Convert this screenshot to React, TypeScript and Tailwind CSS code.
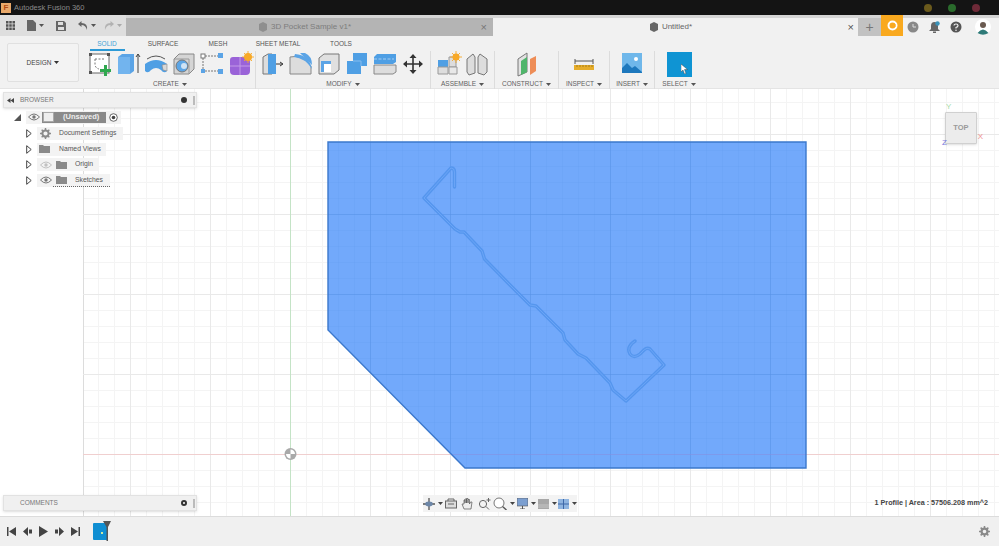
import React from 'react';

const Caret = ({ color = '#555' }: { color?: string }) => (
  <svg width="5" height="3" viewBox="0 0 5 3" className="inline-block ml-[3px] align-middle">
    <path d="M0 0h5L2.5 3z" fill={color} />
  </svg>
);

const Ico = ({ children, w = 28 }: { children: React.ReactNode; w?: number }) => (
  <svg width={w} height="26" viewBox={`0 0 ${w} 26`} className="shrink-0">
    {children}
  </svg>
);

const SketchIcon = () => (
  <Ico>
    <rect x="4" y="3" width="19" height="19" fill="#fff" stroke="#666" strokeWidth="1" />
    <path d="M9 8h10M9 8v5q0 4 4 5" fill="none" stroke="#777" strokeDasharray="2 1.5" />
    <rect x="3" y="2" width="3" height="3" fill="#555" />
    <rect x="21" y="2" width="3" height="3" fill="#555" />
    <rect x="3" y="20" width="3" height="3" fill="#555" />
    <path d="M18 14h3v4h4v3h-4v4h-3v-4h-4v-3h4z" fill="#2fa84f" />
  </Ico>
);
const ExtrudeIcon = () => (
  <Ico>
    <path d="M4 6l4-3h12v17l-4 3H4z" fill="#5ba4e6" />
    <path d="M4 6h12v17H4z" fill="#72b4ee" />
    <path d="M24 22V3M22 6l2-3 2 3" stroke="#444" fill="none" />
  </Ico>
);
const RevolveIcon = () => (
  <Ico>
    <path d="M3 13q11-8 22 0v7q-3 3-6-1-5-4-10 0-3 4-6 1z" fill="#4f9fe4" />
    <path d="M5 8q9-6 18 0" fill="none" stroke="#555" />
    <path d="M20 14l5-1v7l-4-1z" fill="#d8d8d8" stroke="#888" strokeWidth=".6" />
  </Ico>
);
const HoleIcon = () => (
  <Ico>
    <path d="M4 8l5-5h15v15l-5 5H4z" fill="#d5d5d5" stroke="#888" />
    <path d="M4 8h15v15" fill="none" stroke="#999" />
    <circle cx="12" cy="15" r="6" fill="#5da6e6" stroke="#777" />
    <circle cx="14" cy="15" r="3" fill="#cfe3f5" />
  </Ico>
);
const PatternIcon = () => (
  <Ico>
    <path d="M7 5h13M7 20h13M5 7v11" stroke="#777" strokeDasharray="2 1" fill="none" />
    <rect x="3" y="3" width="4" height="4" fill="#fff" stroke="#777" />
    <rect x="20" y="2" width="5" height="5" fill="#5ba4e6" />
    <rect x="3" y="18" width="4" height="4" fill="#5ba4e6" />
    <rect x="20" y="18" width="5" height="5" fill="#5ba4e6" />
  </Ico>
);
const FormIcon = () => (
  <Ico>
    <path d="M4 9q0-3 3-3h12q5 0 5 5v9q0 4-4 4H8q-4 0-4-4z" fill="#9a63d8" />
    <path d="M4 15h20M14 6v18" stroke="#c39be8" />
    <circle cx="22" cy="6" r="4" fill="#f7a928" />
    <path d="M22 0v12M16 6h12M18 2l8 8M26 2l-8 8" stroke="#f7a928" strokeWidth=".9" />
  </Ico>
);
const PressPullIcon = () => (
  <Ico>
    <path d="M4 6l5-3h4v20H4z" fill="#ddd" stroke="#777" />
    <path d="M9 3h8v20H9z" fill="#4f9fe4" />
    <path d="M17 13h6M21 11l3 2-3 2" stroke="#333" fill="none" />
  </Ico>
);
const FilletIcon = () => (
  <Ico>
    <path d="M3 23V6q12-3 21 9v8z" fill="#ddd" stroke="#888" />
    <path d="M8 3q14 1 17 15-7-11-18-12z" fill="#5ba4e6" />
    <path d="M13 2h5q7 3 7 12" fill="#5ba4e6" />
  </Ico>
);
const ChamferIcon = () => (
  <Ico>
    <path d="M4 7l5-4h15v16l-5 4H4z" fill="#e0e0e0" stroke="#777" />
    <path d="M6 10h10v11H6z" fill="#5ba4e6" />
    <path d="M9 13h7v8H9z" fill="#fff" />
  </Ico>
);
const CombineIcon = () => (
  <Ico>
    <path d="M10 2h14v13h-6v8H4V10h6z" fill="#4f9fe4" />
    <path d="M10 10h8v5" fill="none" stroke="#86bdef" />
  </Ico>
);
const OffsetIcon = () => (
  <Ico>
    <path d="M3 14h22v7l-3 2H3z" fill="#ddd" stroke="#888" />
    <path d="M3 6l3-3h19v8l-3 2H3z" fill="#4f9fe4" />
    <path d="M3 8h20" stroke="#a5cdf2" strokeDasharray="3 1.5" />
  </Ico>
);
const MoveIcon = () => (
  <Ico>
    <path d="M14 6v14M7 13h14" stroke="#333" strokeWidth="1.6" />
    <path d="M14 3l3.500 4h-7zM14 23l3.500-4h-7zM4 13l4-3.500v7zM24 13l-4-3.500v7z" fill="#333" />
  </Ico>
);
const NewComponentIcon = () => (
  <Ico>
    <path d="M3 9h10v7H3z" fill="#4f9fe4" />
    <path d="M14 6h7v10h-7z" fill="#ddd" stroke="#999" />
    <path d="M3 16h10v7H3z" fill="#ddd" stroke="#999" />
    <path d="M14 16h8v7h-8z" fill="#e8e8e8" stroke="#999" />
    <circle cx="21" cy="6" r="3.500" fill="#f7a928" />
    <path d="M21 0v12M15 6h12M17 2l8 8M25 2l-8 8" stroke="#f7a928" strokeWidth=".9" />
  </Ico>
);
const JointIcon = () => (
  <Ico>
    <path d="M4 8l6-5 2 3v16l-6 2-2-3z" fill="#ddd" stroke="#777" />
    <path d="M24 8l-7-5-2 3v16l6 2 3-3z" fill="#ddd" stroke="#777" />
  </Ico>
);
const PlaneIcon = () => (
  <Ico>
    <path d="M5 8l9-6v19l-9 4z" fill="#e2e2e2" stroke="#777" />
    <path d="M8 10l6-4v15l-6 3z" fill="#4fb56b" />
    <path d="M17 8l6-3v15l-6 4z" fill="#ee8d57" />
  </Ico>
);
const MeasureIcon = () => (
  <Ico>
    <path d="M5 8v5M23 8v5M5 10h18" stroke="#555" fill="none" />
    <rect x="4" y="14" width="20" height="5" fill="#e6ad2b" />
    <path d="M7 14v2M10 14v2M13 14v2M16 14v2M19 14v2M22 14v2" stroke="#8a6a10" strokeWidth=".7" />
  </Ico>
);
const InsertIcon = () => (
  <Ico>
    <rect x="4" y="2" width="20" height="20" fill="#6fb7ea" />
    <circle cx="18" cy="8" r="2" fill="#fff" />
    <path d="M4 22v-5l5-5 5 5 3-2 7 6v1z" fill="#1d78bd" />
  </Ico>
);

const RibbonGroup = ({
  width,
  label,
  last,
  children,
}: {
  width: number;
  label: string;
  last?: boolean;
  children: React.ReactNode;
}) => (
  <div
    className={`flex flex-col items-center shrink-0 ${last ? '' : 'border-r border-[#dcdcdc]'}`}
    style={{ width }}
  >
    <div className="flex h-[26px] items-center justify-center">{children}</div>
    <div className="h-[12px] leading-[13px] text-[6.5px] text-[#5f5f5f] whitespace-nowrap">
      {label}
      <Caret />
    </div>
  </div>
);

const Eye = ({ faded }: { faded?: boolean }) => (
  <svg width="12" height="8" viewBox="0 0 12 8" className={`shrink-0 ${faded ? 'opacity-40' : ''}`}>
    <path d="M.5 4Q6-2 11.500 4 6 10 .5 4z" fill="none" stroke="#777" />
    <circle cx="6" cy="4" r="1.700" fill="#777" />
  </svg>
);
const Folder = () => (
  <svg width="11" height="8" viewBox="0 0 11 8" className="shrink-0">
    <path d="M0 0h4l1 1h6v7H0z" fill="#8a8a8a" />
  </svg>
);
const Arrow = () => (
  <svg width="6" height="9" viewBox="0 0 6 9" className="shrink-0">
    <path d="M.7.7L5.200 4.500.7 8.300z" fill="#fff" stroke="#444" strokeWidth="1" />
  </svg>
);

const TreeLabel = ({ children }: { children: React.ReactNode }) => (
  <span className="text-[6.8px] leading-none text-[#555] whitespace-nowrap">{children}</span>
);

const BrowserTree = () => (
  <div className="flex flex-col mt-px text-[#555]">
    <div className="flex items-center h-[16px] pl-[14px]">
      <svg width="7" height="7" viewBox="0 0 7 7" className="shrink-0">
        <path d="M0 7L7 0v7z" fill="#555" />
      </svg>
      <div className="flex items-center h-[13px] ml-[5px] pl-[2px] bg-[#f3f3f3]">
        <Eye />
        <div className="flex items-center h-[11px] w-[64px] ml-[2px] bg-[#8a8a8a]">
          <div className="w-[11px] h-[10px] ml-px bg-[#eee] border border-[#aaa] rounded-[1px]" />
          <span className="ml-[9px] text-[7.5px] leading-none font-bold text-[#eee]">(Unsaved)</span>
        </div>
        <svg width="9" height="9" viewBox="0 0 9 9" className="ml-[3px] mr-[3px]">
          <circle cx="4.500" cy="4.500" r="3.800" fill="#fff" stroke="#444" strokeWidth=".8" />
          <circle cx="4.500" cy="4.500" r="1.800" fill="#444" />
        </svg>
      </div>
    </div>
    <div className="flex items-center h-[16px] pl-[26px]">
      <Arrow />
      <div className="flex items-center h-[13px] ml-[5px] pl-[3px] pr-[7px] bg-[#f3f3f3]">
        <svg width="11" height="11" viewBox="0 0 12 12" className="shrink-0">
          <circle cx="6" cy="6" r="3.400" fill="none" stroke="#8a8a8a" strokeWidth="2.200" />
          <path d="M6 0v2.500M6 9.500V12M0 6h2.500M9.500 6H12M1.800 1.800l1.800 1.800M8.400 8.400l1.800 1.800M1.800 10.200l1.800-1.800M8.400 3.600l1.800-1.800" stroke="#8a8a8a" strokeWidth="1.600" />
        </svg>
        <span className="ml-[8px] flex">
          <TreeLabel>Document Settings</TreeLabel>
        </span>
      </div>
    </div>
    <div className="flex items-center h-[16px] pl-[26px]">
      <Arrow />
      <div className="flex items-center h-[13px] ml-[5px] pl-[2px] pr-[5px] bg-[#f3f3f3]">
        <Folder />
        <span className="ml-[9px] flex">
          <TreeLabel>Named Views</TreeLabel>
        </span>
      </div>
    </div>
    <div className="flex items-center h-[15px] pl-[26px]">
      <Arrow />
      <div className="flex items-center h-[13px] ml-[5px] pl-[3px] pr-[6px] bg-[#f3f3f3]">
        <Eye faded />
        <span className="ml-[4px] flex">
          <Folder />
        </span>
        <span className="ml-[8px] flex">
          <TreeLabel>Origin</TreeLabel>
        </span>
      </div>
    </div>
    <div className="flex items-center h-[16px] pl-[26px]">
      <Arrow />
      <div className="flex items-center h-[13px] ml-[5px] pl-[3px] pr-[7px] bg-[#f3f3f3] relative">
        <Eye />
        <span className="ml-[4px] flex">
          <Folder />
        </span>
        <span className="ml-[8px] flex">
          <TreeLabel>Sketches</TreeLabel>
        </span>
        <span className="absolute left-[16px] right-0 bottom-0 border-b border-dotted border-[#666]" />
      </div>
    </div>
  </div>
);

const majorX = [130, 210, 290, 370, 450, 530, 610, 690, 770, 850, 930];
const majorY = [134, 214, 294, 374, 454];

const xs: number[] = [];
for (let x = 98; x < 999; x += 16) xs.push(x);
const ys: number[] = [];
for (let y = 102; y < 516; y += 16) ys.push(y);

const slot =
  'M454.5 187V172Q454.5 168 451 168L424 198L455 229L460 232L464 232L482 251L484.5 259L510 285L530 305L536 306L563 333L565 340L578 354L586 358L610 383L613 390L626 401L664 365L650 349Q647 347 644 350L640 354Q634 359 630 354Q626 347 635 341';

const Viewport = () => (
  <svg viewBox="0 89 999 427" width="999" height="427" className="absolute inset-0">
    <rect x="0" y="89" width="999" height="427" fill="#ffffff" />
    {xs.map(x => (
      <path key={x} d={`M${x + 0.5} 89V516`} stroke="#f4f4f4" />
    ))}
    {ys.map(y => (
      <path key={y} d={`M83 ${y + 0.5}H999`} stroke="#f4f4f4" />
    ))}
    <path d="M83.5 89V516" stroke="#dcdcdc" />
    {majorX.map(x => (
      <path key={x} d={`M${x + 0.5} 89V516`} stroke="#e9e9e9" />
    ))}
    {majorY.map(y => (
      <path key={y} d={`M83 ${y + 0.5}H999`} stroke="#e9e9e9" />
    ))}
    <path d="M83 454.5H999" stroke="#f0cfcf" />
    <path d="M290.5 89V516" stroke="#c4e3c6" />
    <path d="M328 142H806V468H465L328 330Z" fill="#72a9fb" />
    {xs.filter(x => x > 328 && x < 806).map(x => (
      <path key={x} d={`M${x + 0.5} 142V${x < 465 ? 330 + (x - 328) : 468}`} stroke="#5f9bf0" strokeOpacity="0.2" />
    ))}
    {ys.filter(y => y > 142 && y < 468).map(y => (
      <path key={y} d={`M${y < 330 ? 328 : 328 + (y - 330)} ${y + 0.5}H806`} stroke="#5f9bf0" strokeOpacity="0.2" />
    ))}
    {majorX.filter(x => x > 328 && x < 806).map(x => (
      <path key={x} d={`M${x + 0.5} 142V${x < 465 ? 330 + (x - 328) : 468}`} stroke="#5a94e8" strokeOpacity="0.55" />
    ))}
    {majorY.filter(y => y > 142 && y < 468).map(y => (
      <path key={y} d={`M${y < 330 ? 328 : 328 + (y - 330)} ${y + 0.5}H806`} stroke={y === 454 ? '#8a8fe0' : '#5a94e8'} strokeOpacity="0.55" />
    ))}
    <path d="M328 142H806V468H465L328 330Z" fill="none" stroke="#3b78cc" strokeWidth="1.400" />
    <path d={slot} fill="none" stroke="#5596ee" strokeWidth="3.400" strokeLinejoin="round" strokeLinecap="round" />
    <path d={slot} fill="none" stroke="#78aefb" strokeWidth="0.6" strokeLinejoin="round" />
    <circle cx="290.5" cy="454" r="6" fill="#a9a9a9" />
    <path d="M290.5 454V449.5A4.5 4.5 0 0 1 295 454zM290.5 454V458.5A4.5 4.5 0 0 1 286 454z" fill="#ffffff" />
  </svg>
);

const ViewCube = () => (
  <div className="absolute right-[22px] top-[23px] w-[32px] h-[32px] bg-[#ececec] border border-[#d0d0d0] rounded-[1px] flex items-center justify-center shadow-sm">
    <span className="text-[7.5px] font-bold text-[#9a9a9a]">TOP</span>
    <span className="absolute -top-[12px] left-0 text-[8px] text-[#a8dca8]">Y</span>
    <span className="absolute -right-[7px] bottom-0 text-[8px] text-[#ee8f8f]">X</span>
    <span className="absolute -left-[4px] -bottom-[6px] text-[8px] text-[#7a7ae0]">Z</span>
  </div>
);

const SidePanelBar = ({ title, collapse }: { title: string; collapse?: boolean }) => (
  <div className="flex items-center h-[16px] w-[194px] ml-[3px] bg-[#f0f0f0] border border-[#e2e2e2] shadow-sm">
    <span className="w-[16px] pl-[3px] flex">
      {collapse && (
        <svg width="7" height="5" viewBox="0 0 7 5">
          <path d="M3.500 0v5L0 2.500zM7 0v5L3.500 2.500z" fill="#444" />
        </svg>
      )}
    </span>
    <span className="text-[6.5px] text-[#777] flex-1">{title}</span>
    <span className={`w-[6px] h-[6px] rounded-full mr-[6px] ${collapse ? 'bg-[#333]' : 'bg-white border-2 border-[#333]'}`} />
    <span className="w-[2px] h-[9px] bg-[#bbb] mr-px" />
  </div>
);

const NavBar = () => (
  <div className="absolute left-[423px] bottom-[4px] h-[17px] w-[154px] bg-[#f3f3f3] flex items-center">
    <div className="w-[21px] flex items-center">
      <svg width="12" height="12" viewBox="0 0 12 12">
        <path d="M6 0v12M0 6h12" stroke="#555" strokeWidth="1.300" />
        <ellipse cx="6" cy="6" rx="3.800" ry="2.400" fill="#6d87a8" />
      </svg>
      <Caret color="#444" />
    </div>
    <div className="w-[14px] flex justify-center">
      <svg width="12" height="11" viewBox="0 0 12 11">
        <rect x=".5" y="3" width="11" height="7" fill="#ddd" stroke="#666" />
        <path d="M3 3V1h6v2M3 6h6" stroke="#666" fill="none" />
      </svg>
    </div>
    <div className="w-[18px] flex justify-center">
      <svg width="12" height="12" viewBox="0 0 12 12">
        <path d="M3 11L1 6l2 0V2h1v3-4h1.500v4V.5H7V5V1.500h1.500V6l1-2h1.500L10 11z" fill="#eee" stroke="#555" strokeWidth=".7" />
      </svg>
    </div>
    <div className="w-[16px] flex justify-center">
      <svg width="13" height="12" viewBox="0 0 13 12">
        <circle cx="5" cy="6" r="3.600" fill="none" stroke="#666" />
        <path d="M8 8.500l3 3" stroke="#666" />
        <path d="M10.500 0v4M8.500 2h4" stroke="#666" />
      </svg>
    </div>
    <div className="w-[24px] flex items-center pl-px">
      <svg width="14" height="13" viewBox="0 0 14 13">
        <circle cx="6" cy="6" r="5" fill="#fff" stroke="#777" />
        <path d="M9.500 9.500l4 3.500" stroke="#555" strokeWidth="1.400" />
      </svg>
      <Caret color="#444" />
    </div>
    <div className="w-[21px] flex items-center pl-px">
      <svg width="11" height="11" viewBox="0 0 11 11">
        <rect x="0" y="0" width="11" height="8" fill="#7c9fd0" stroke="#555" strokeWidth=".6" />
        <path d="M3 11h5M5.500 8v3" stroke="#555" />
      </svg>
      <Caret color="#444" />
    </div>
    <div className="w-[21px] flex items-center pl-px">
      <svg width="11" height="10" viewBox="0 0 11 10">
        <rect width="11" height="10" fill="#a8a8a8" />
        <path d="M0 6h11M0 8h11" stroke="#d8d8d8" strokeWidth=".6" />
      </svg>
      <Caret color="#444" />
    </div>
    <div className="w-[19px] flex items-center">
      <svg width="11" height="10" viewBox="0 0 11 10">
        <rect width="11" height="10" fill="#8fb4e0" />
        <path d="M5.500 0v10M0 5h11" stroke="#3e68a8" />
      </svg>
      <Caret color="#444" />
    </div>
  </div>
);

const App = () => {
  return (
    <div className="w-[999px] h-[546px] flex flex-col overflow-hidden bg-white font-['Liberation_Sans',Arial,sans-serif]">
      {/* title bar */}
      <div className="h-[15px] bg-[#141414] flex items-center shrink-0">
        <div className="w-[10px] h-[10px] ml-[1px] bg-[#e8a86a] flex items-center justify-center text-[8px] font-bold leading-none text-[#b34a10]">
          F
        </div>
        <span className="ml-[3px] text-[7.5px] text-[#8a8a8a]">Autodesk Fusion 360</span>
        <div className="ml-auto flex gap-[16px] mr-[19px]">
          <span className="w-[8px] h-[8px] rounded-full bg-[#6b5a1c]" />
          <span className="w-[8px] h-[8px] rounded-full bg-[#2a6b2c]" />
          <span className="w-[8px] h-[8px] rounded-full bg-[#6e2a38]" />
        </div>
      </div>

      {/* tab bar */}
      <div className="h-[21px] flex shrink-0 bg-[#d5d5d5]">
        <div className="w-[126px] flex items-center bg-[#dedede] text-[#555] shrink-0">
          <svg width="9" height="9" viewBox="0 0 9 9" className="ml-[6px]">
            <path d="M0 0h2.500v2.500H0zM3.250 0h2.500v2.500h-2.500zM6.500 0H9v2.500H6.500zM0 3.250h2.500v2.500H0zM3.250 3.250h2.500v2.500h-2.500zM6.500 3.250H9v2.500H6.500zM0 6.500h2.500V9H0zM3.250 6.500h2.500V9h-2.500zM6.500 6.500H9V9H6.500z" fill="#555" />
          </svg>
          <svg width="9" height="11" viewBox="0 0 9 11" className="ml-[12px]">
            <path d="M0 0h6l3 3v8H0z" fill="#666" />
          </svg>
          <Caret />
          <svg width="10" height="10" viewBox="0 0 10 10" className="ml-[12px]">
            <path d="M0 0h8l2 2v8H0z" fill="#666" />
            <rect x="2" y="1" width="5" height="3" fill="#dedede" />
            <rect x="2" y="6" width="6" height="3" fill="#dedede" />
          </svg>
          <svg width="10" height="9" viewBox="0 0 10 9" className="ml-[12px]">
            <path d="M3.500 0L0 3l3.500 3V4q4 0 5.500 5 1-7-5.500-7z" fill="#666" />
          </svg>
          <Caret />
          <svg width="10" height="9" viewBox="0 0 10 9" className="ml-[8px] opacity-50">
            <path d="M6.500 0L10 3 6.500 6V4q-4 0-5.500 5-1-7 5.500-7z" fill="#888" />
          </svg>
          <Caret color="#aaa" />
        </div>
        <div className="w-[367px] mt-[3px] bg-[#b4b4b4] flex items-center justify-center pr-[10px] relative shrink-0">
          <svg width="10" height="10" viewBox="0 0 10 10" className="mr-[3px]">
            <path d="M1 2l4-2 4 2v6l-4 2-4-2z" fill="#8f8f8f" />
          </svg>
          <span className="text-[8px] text-[#7d7d7d]">3D Pocket Sample v1*</span>
          <span className="absolute right-[6px] text-[11px] leading-none text-[#777]">×</span>
        </div>
        <div className="w-[365px] mt-[3px] bg-[#f1f1f1] flex items-center justify-center pr-[10px] relative shrink-0">
          <svg width="10" height="10" viewBox="0 0 10 10" className="mr-[3px]">
            <path d="M1 2l4-2 4 2v6l-4 2-4-2z" fill="#666" />
          </svg>
          <span className="text-[8px] text-[#666]">Untitled*</span>
          <span className="absolute right-[4px] text-[11px] leading-none text-[#555]">×</span>
        </div>
        <div className="w-[23px] mt-[3px] bg-[#c2c2c2] flex items-center justify-center text-[14px] leading-none text-[#777] shrink-0">
          +
        </div>
        <div className="w-[22px] bg-[#f9a91f] flex items-center justify-center shrink-0">
          <svg width="11" height="11" viewBox="0 0 11 11">
            <circle cx="5.500" cy="5.500" r="4" fill="none" stroke="#fff" strokeWidth="2" />
            <path d="M4 4h4v3" fill="none" stroke="#f9a91f" />
          </svg>
        </div>
        <div className="flex-1 mt-[3px] bg-[#f1f1f1] flex items-center">
          <svg width="12" height="12" viewBox="0 0 12 12" className="ml-[4px]">
            <circle cx="6" cy="6" r="5.500" fill="#888" />
            <path d="M6 3v3h3" stroke="#ddd" fill="none" />
          </svg>
          <svg width="11" height="12" viewBox="0 0 11 12" className="ml-[10px]">
            <path d="M5.500 1Q2 1 2 5v3L0 10h11L9 8V5q0-4-3.500-4zM4 10.500h3V12H4z" fill="#666" />
            <circle cx="8.500" cy="2.500" r="2.200" fill="#3a92b8" />
          </svg>
          <svg width="12" height="12" viewBox="0 0 12 12" className="ml-[10px]">
            <circle cx="6" cy="6" r="5.500" fill="#555" />
            <path d="M4 4.500Q4 3 6 3t2 1.500Q8 6 6 6.500v1" stroke="#eee" fill="none" strokeWidth="1.200" />
            <circle cx="6" cy="9.200" r=".8" fill="#eee" />
          </svg>
          <svg width="16" height="16" viewBox="0 0 16 16" className="ml-[13px]">
            <circle cx="8" cy="8" r="8" fill="#fff" />
            <circle cx="8" cy="6" r="3" fill="#6a5a50" />
            <path d="M2.500 14q5.500-7 11 0-5.500 3.500-11 0z" fill="#2e7a78" />
          </svg>
        </div>
      </div>

      {/* ribbon */}
      <div className="h-[53px] flex bg-[#f1f1f1] border-b border-[#e4e4e4] shrink-0">
        <div className="w-[72px] h-[39px] mt-[7px] ml-[7px] shrink-0 bg-[#f3f3f3] border border-[#e0e0e0] rounded-[2px] flex items-center justify-center text-[6.5px] text-[#444]">
          DESIGN
          <Caret color="#333" />
        </div>
        <div className="ml-[6px] flex flex-col">
          <div className="flex h-[15px] text-[6.5px] text-[#555] text-center leading-[15px]">
            <div className="w-[44px] h-[15px] text-[#3f9fd6] relative">
              SOLID
              <span className="absolute left-[5px] right-[4px] bottom-0 h-[2px] bg-[#2d9ad6]" />
            </div>
            <div className="w-[68px]">SURFACE</div>
            <div className="w-[42px]">MESH</div>
            <div className="w-[78px]">SHEET METAL</div>
            <div className="w-[48px]">TOOLS</div>
          </div>
          <div className="flex">
            <RibbonGroup width={171} label="CREATE">
              <SketchIcon />
              <ExtrudeIcon />
              <RevolveIcon />
              <HoleIcon />
              <PatternIcon />
              <FormIcon />
            </RibbonGroup>
            <RibbonGroup width={175} label="MODIFY">
              <PressPullIcon />
              <FilletIcon />
              <ChamferIcon />
              <CombineIcon />
              <OffsetIcon />
              <MoveIcon />
            </RibbonGroup>
            <RibbonGroup width={64} label="ASSEMBLE">
              <NewComponentIcon />
              <JointIcon />
            </RibbonGroup>
            <RibbonGroup width={64} label="CONSTRUCT">
              <PlaneIcon />
            </RibbonGroup>
            <RibbonGroup width={51} label="INSPECT">
              <MeasureIcon />
            </RibbonGroup>
            <RibbonGroup width={45} label="INSERT">
              <InsertIcon />
            </RibbonGroup>
            <RibbonGroup width={48} label="SELECT" last>
              <div className="w-[25px] h-[25px] bg-[#0f94d3] flex items-end justify-end pr-[4px] pb-[3px]">
                <svg width="7" height="10" viewBox="0 0 7 10">
                  <path d="M0 0v8l2-2 1.500 4 1.500-.5L3.500 5.500H6.500z" fill="#fff" stroke="#333" strokeWidth=".4" />
                </svg>
              </div>
            </RibbonGroup>
          </div>
        </div>
      </div>

      {/* viewport */}
      <div className="flex-1 relative overflow-hidden">
        <Viewport />
        <div className="absolute left-0 top-[3px]">
          <SidePanelBar title="BROWSER" collapse />
          <BrowserTree />
        </div>
        <ViewCube />
        <div className="absolute left-0 bottom-[5px]">
          <SidePanelBar title="COMMENTS" />
        </div>
        <NavBar />
        <div className="absolute right-[11px] bottom-[7px] text-[7.2px] font-bold text-[#444]">
          1 Profile | Area : 57506.208 mm^2
        </div>
      </div>

      {/* timeline */}
      <div className="h-[30px] bg-[#f0f0f0] border-t border-[#dcdcdc] flex items-center shrink-0">
        <div className="flex items-center ml-[7px] gap-[7px]">
          <svg width="9" height="9" viewBox="0 0 9 9">
            <path d="M0 0h1.500v9H0zM9 0v9L2 4.500z" fill="#444" />
          </svg>
          <svg width="9" height="9" viewBox="0 0 9 9">
            <path d="M5 0v9L0 4.500zM6 2.500h3v4H6z" fill="#444" />
          </svg>
          <svg width="9" height="11" viewBox="0 0 9 11">
            <path d="M0 0l9 5.500L0 11z" fill="#444" />
          </svg>
          <svg width="9" height="9" viewBox="0 0 9 9">
            <path d="M4 0v9l5-4.500zM0 2.500h3v4H0z" fill="#444" />
          </svg>
          <svg width="9" height="9" viewBox="0 0 9 9">
            <path d="M9 0H7.500v9H9zM0 0v9l7-4.500z" fill="#444" />
          </svg>
        </div>
        <div className="relative ml-[13px] w-[15px] h-[17px] bg-[#0f8ed2] rounded-[1px]">
          <span className="absolute left-[8px] top-[9px] w-[2px] h-[2px] bg-[#cfe8a0]" />
          <svg width="8" height="22" viewBox="0 0 8 22" className="absolute -right-[3px] -top-[2px]">
            <path d="M0 0h8L5 6v14H3.500V6z" fill="#555" />
          </svg>
        </div>
        <svg width="11" height="11" viewBox="0 0 12 12" className="ml-auto mr-[9px]">
          <circle cx="6" cy="6" r="3.200" fill="none" stroke="#8a8a8a" strokeWidth="2.400" />
          <path d="M6 0v2.500M6 9.500V12M0 6h2.500M9.500 6H12M1.800 1.800l1.800 1.800M8.400 8.400l1.800 1.800M1.800 10.200l1.800-1.800M8.400 3.600l1.800-1.800" stroke="#8a8a8a" strokeWidth="1.700" />
        </svg>
      </div>
    </div>
  );
};

export default App;
